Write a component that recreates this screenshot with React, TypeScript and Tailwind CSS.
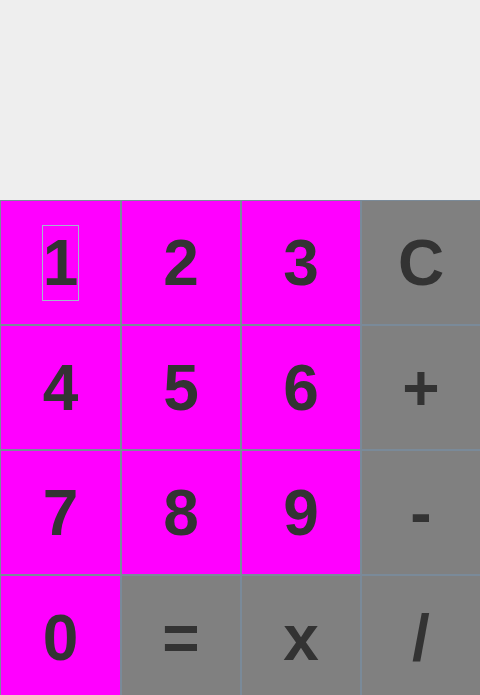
const keys = [
  { label: '1', op: false },
  { label: '2', op: false },
  { label: '3', op: false },
  { label: 'C', op: true },
  { label: '4', op: false },
  { label: '5', op: false },
  { label: '6', op: false },
  { label: '+', op: true },
  { label: '7', op: false },
  { label: '8', op: false },
  { label: '9', op: false },
  { label: '-', op: true },
  { label: '0', op: false },
  { label: '=', op: true },
  { label: 'x', op: true },
  { label: '/', op: true },
]

const App = () => {
  return (
    <div className="w-[480px] overflow-hidden bg-[#eeeeee] font-['Liberation_Sans',Arial,sans-serif]">
      {/* Display */}
      <div className="h-[200px] bg-[#eeeeee]" />

      {/* Keypad */}
      <div className="grid w-[481px] grid-cols-[121px_120px_120px_120px] grid-rows-[repeat(4,125px)]">
        {keys.map((key, i) => (
          <button
            key={key.label}
            className={`flex items-center justify-center border border-[#7a8a99] text-[64px] font-bold leading-[74px] text-[#333333] ${
              key.op ? 'bg-[#808080]' : 'bg-[#ff00ff]'
            }`}
          >
            <span className={i === 0 ? 'outline outline-1 outline-[#a3b8cc]' : ''}>{key.label}</span>
          </button>
        ))}
      </div>
    </div>
  )
}

export default App
